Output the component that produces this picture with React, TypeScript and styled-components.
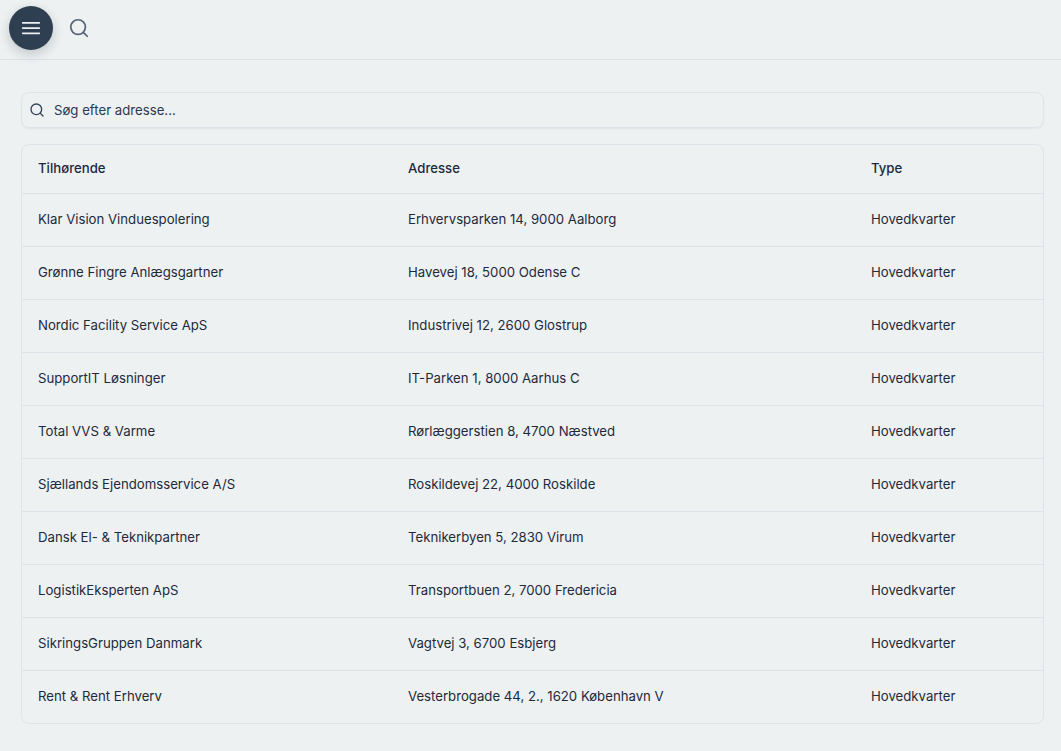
import styled, { createGlobalStyle } from 'styled-components';
import { Search } from 'lucide-react';
import { HiOutlineBars3 } from 'react-icons/hi2';

const rows = [
  ['Klar Vision Vinduespolering', 'Erhvervsparken 14, 9000 Aalborg'],
  ['Grønne Fingre Anlægsgartner', 'Havevej 18, 5000 Odense C'],
  ['Nordic Facility Service ApS', 'Industrivej 12, 2600 Glostrup'],
  ['SupportIT Løsninger', 'IT-Parken 1, 8000 Aarhus C'],
  ['Total VVS & Varme', 'Rørlæggerstien 8, 4700 Næstved'],
  ['Sjællands Ejendomsservice A/S', 'Roskildevej 22, 4000 Roskilde'],
  ['Dansk El- & Teknikpartner', 'Teknikerbyen 5, 2830 Virum'],
  ['LogistikEksperten ApS', 'Transportbuen 2, 7000 Fredericia'],
  ['SikringsGruppen Danmark', 'Vagtvej 3, 6700 Esbjerg'],
  ['Rent & Rent Erhverv', 'Vesterbrogade 44, 2., 1620 København V'],
];

export default function App() {
  return (
    <>
      <GlobalStyle />
      <Header>
        <MenuButton aria-label="Menu">
          <HiOutlineBars3 size={24} strokeWidth={1.75} />
        </MenuButton>
        <HeaderSearch aria-label="Søg">
          <Search size={22} strokeWidth={1.9} />
        </HeaderSearch>
      </Header>
      <Main>
        <SearchBox>
          <Search size={16} strokeWidth={2} />
          <SearchInput placeholder="Søg efter adresse..." />
        </SearchBox>
        <TableCard>
          <Table>
            <colgroup>
              <col width={370} />
              <col width={463} />
              <col />
            </colgroup>
            <thead>
              <tr>
                <Th>Tilhørende</Th>
                <Th>Adresse</Th>
                <Th>Type</Th>
              </tr>
            </thead>
            <tbody>
              {rows.map(([owner, address]) => (
                <Row key={owner}>
                  <Td>{owner}</Td>
                  <Td>{address}</Td>
                  <Td>Hovedkvarter</Td>
                </Row>
              ))}
            </tbody>
          </Table>
        </TableCard>
      </Main>
    </>
  );
}

const GlobalStyle = createGlobalStyle`
  html, body {
    margin: 0;
    background: #edf1f2;
    color: #1e293b;
    font-family: Inter, "Noto Sans", sans-serif;
    font-size: 13.2px;
  }
  * {
    box-sizing: border-box;
  }
`;

const Header = styled.header`
  height: 60px;
  display: flex;
  align-items: center;
  gap: 15px;
  padding: 0 9px 4px;
  border-bottom: 1px solid #dde3e6;
`;

const MenuButton = styled.button`
  width: 44px;
  height: 44px;
  padding: 0;
  border: none;
  border-radius: 50%;
  display: flex;
  align-items: center;
  justify-content: center;
  background: #2f3f52;
  color: #edf1f2;
  box-shadow: 0 4px 12px rgba(15, 23, 42, 0.2);
`;

const HeaderSearch = styled.button`
  width: 22px;
  height: 22px;
  padding: 0;
  border: none;
  background: none;
  color: #56647a;
  display: flex;
`;

const Main = styled.main`
  padding: 32px 17px 27px 21px;
`;

const SearchBox = styled.label`
  height: 36px;
  display: flex;
  align-items: center;
  gap: 9px;
  padding: 0 7px;
  border: 1px solid #dde5ea;
  border-radius: 8px;
  box-shadow: 0 1px 2px rgba(15, 23, 42, 0.05);
  color: #334155;
`;

const SearchInput = styled.input`
  flex: 1;
  border: none;
  outline: none;
  background: none;
  padding: 0;
  font: inherit;
  color: inherit;
  &::placeholder {
    color: #2b394d;
    opacity: 1;
  }
`;

const TableCard = styled.div`
  margin-top: 16px;
  border: 1px solid #dde5ea;
  border-radius: 8px;
  overflow: hidden;
`;

const Table = styled.table`
  width: 100%;
  border-collapse: collapse;
  table-layout: fixed;
`;

const Th = styled.th`
  height: 48px;
  padding: 0 16px 1px;
  text-align: left;
  font-weight: 500;
  color: #1e293b;
  border-bottom: 1px solid #dde5ea;
`;

const Row = styled.tr`
  & + & td {
    border-top: 1px solid #dde5ea;
  }
`;

const Td = styled.td`
  height: 53px;
  padding: 0 16px 2px;
  color: #1e293b;
`;
